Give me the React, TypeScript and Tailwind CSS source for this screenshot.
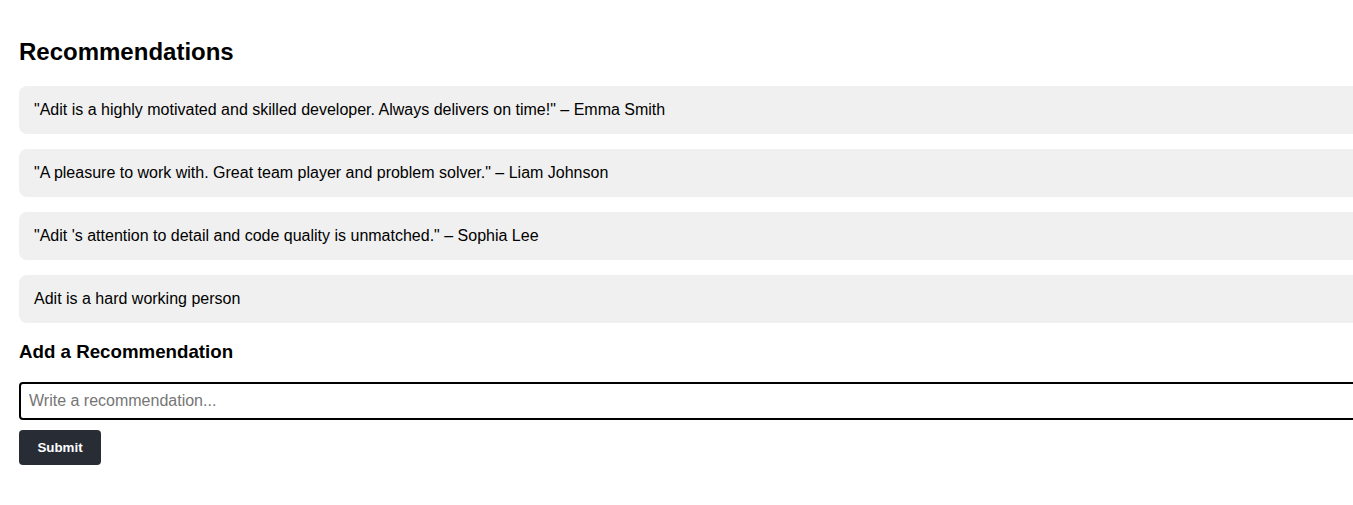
const recs = [
  '"Adit is a highly motivated and skilled developer. Always delivers on time!" – Emma Smith',
  '"A pleasure to work with. Great team player and problem solver." – Liam Johnson',
  '"Adit \'s attention to detail and code quality is unmatched." – Sophia Lee',
  "Adit is a hard working person",
];

const App = () => {
  return (
    <div className="w-screen h-screen overflow-hidden bg-white font-['Liberation_Sans',Arial,sans-serif] text-black">
      <div className="w-[1400px] pl-[19px] pt-[38px]">
        <h2 className="text-[24px] leading-[28px] font-bold mb-[20px]">Recommendations</h2>
        <div className="flex flex-col gap-[15px]">
          {recs.map((r) => (
            <div key={r} className="bg-[#f0f0f0] rounded-lg p-[15px] text-[16px] leading-[18px]">
              {r}
            </div>
          ))}
        </div>
        <h3 className="text-[18.72px] leading-[22px] font-bold mt-[18px] mb-[19px]">
          Add a Recommendation
        </h3>
        <input
          type="text"
          placeholder="Write a recommendation..."
          className="block w-full h-[38px] border-2 border-black rounded px-2 text-[16px] placeholder:text-[#757575] outline-none"
        />
        <button className="mt-[10px] w-[82px] h-[35px] bg-[#282c34] text-white text-[13.33px] font-bold rounded">
          Submit
        </button>
      </div>
    </div>
  );
};

export default App;
